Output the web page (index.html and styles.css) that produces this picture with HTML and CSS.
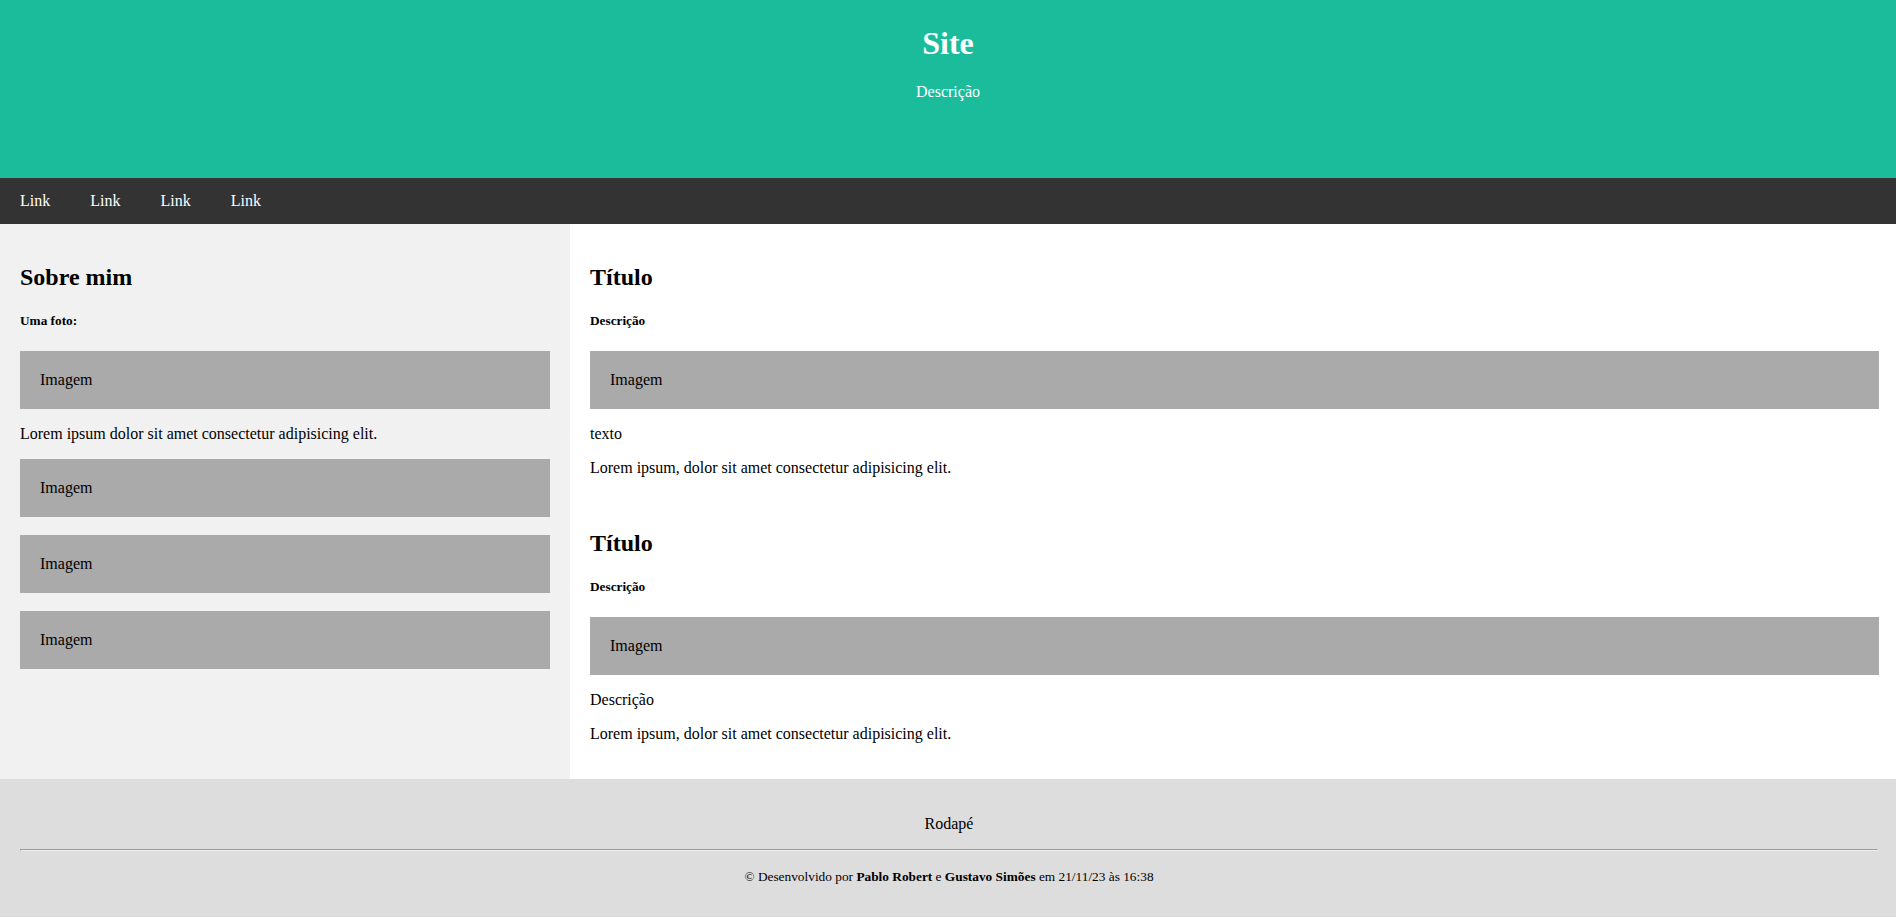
FILE: index.html
```html
<!DOCTYPE html>
<html lang="pt-BR">
<head>
<meta charset="utf-8">
<title>Site</title>
<link rel="stylesheet" href="styles.css">
</head>
<body>
<header class="site-header">
  <h1 class="site-title">Site</h1>
  <p class="site-desc">Descrição</p>
</header>
<nav class="topnav">
  <a href="#" class="topnav-link">Link</a>
  <a href="#" class="topnav-link">Link</a>
  <a href="#" class="topnav-link">Link</a>
  <a href="#" class="topnav-link">Link</a>
</nav>
<main class="layout">
  <aside class="side">
    <h2 class="heading">Sobre mim</h2>
    <h5 class="subheading">Uma foto:</h5>
    <div class="fake-img">Imagem</div>
    <p class="text">Lorem ipsum dolor sit amet consectetur adipisicing elit.</p>
    <div class="fake-img">Imagem</div>
    <div class="fake-img">Imagem</div>
    <div class="fake-img">Imagem</div>
  </aside>
  <section class="content">
    <article class="post">
      <h2 class="heading">Título</h2>
      <h5 class="subheading">Descrição</h5>
      <div class="fake-img">Imagem</div>
      <p class="text">texto</p>
      <p class="text">Lorem ipsum, dolor sit amet consectetur adipisicing elit.</p>
    </article>
    <article class="post">
      <h2 class="heading">Título</h2>
      <h5 class="subheading">Descrição</h5>
      <div class="fake-img">Imagem</div>
      <p class="text">Descrição</p>
      <p class="text">Lorem ipsum, dolor sit amet consectetur adipisicing elit.</p>
    </article>
  </section>
</main>
<footer class="site-footer">
  <p class="footer-title">Rodapé</p>
  <hr class="footer-rule">
  <p class="footer-copy"><small>© Desenvolvido por <b>Pablo Robert</b> e <b>Gustavo Simões</b> em 21/11/23 às 16:38</small></p>
</footer>
</body>
</html>
```
FILE: styles.css
```css
html, body {
  margin: 0;
  padding: 0;
}

body {
  font-family: "Liberation Serif", "Times New Roman", serif;
  font-size: 16px;
  color: #000;
  background: #fff;
}

.site-header {
  box-sizing: border-box;
  height: 178px;
  padding-top: 3.4px;
  background: #1abc9c;
  color: #fff;
  text-align: center;
}

.site-title {
  font-size: 32px;
  margin: 21.44px 0;
}

.site-desc {
  margin: 0;
}

.topnav {
  display: flex;
  align-items: center;
  height: 46px;
  background: #333;
}

.topnav-link {
  padding: 0 20px;
  color: #fff;
  text-decoration: none;
}

.layout {
  display: flex;
  align-items: stretch;
}

.side {
  box-sizing: border-box;
  flex: 0 0 570px;
  padding: 20px;
  background: #f1f1f1;
}

.content {
  flex: 1 1 auto;
  padding: 20px 17px 20px 20px;
  background: #fff;
}

.heading {
  font-size: 24px;
  margin: 19.92px 0;
}

.subheading {
  font-size: 13.28px;
  margin: 22.18px 0;
}

.text {
  margin: 16px 0;
}

.fake-img {
  padding: 20px;
  margin: 16px 0;
  background: #aaa;
}

.fake-img + .fake-img {
  margin-top: 18px;
}

.post + .post {
  margin-top: 52.6px;
}

.site-footer {
  padding: 20px 18px 16px 20px;
  background: #ddd;
  text-align: center;
}

.footer-title {
  margin: 16px 0;
}

.footer-rule {
  margin: 8px 0;
}

.footer-copy {
  margin: 16px 0;
}
```
